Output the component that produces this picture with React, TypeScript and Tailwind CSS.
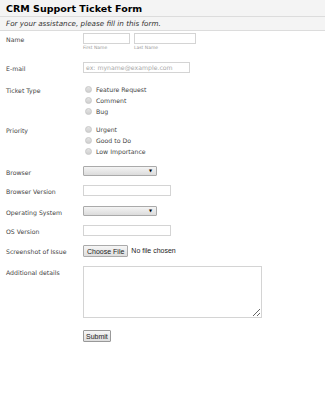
import React from "react"

const font = { fontFamily: '"DejaVu Sans", Verdana, sans-serif' }

function Label({ children }: { children: React.ReactNode }) {
  return <div className="w-[77px] shrink-0 pt-[2px] text-[6.2px] text-[#444]">{children}</div>
}

function Row({ children, className = "" }: { children: React.ReactNode; className?: string }) {
  return <div className={`flex items-start px-[6px] ${className}`}>{children}</div>
}

function TextBox({ w, placeholder }: { w: string; placeholder?: string }) {
  return (
    <div className={`${w} h-[11px] border border-[#d4d4d4] bg-white flex items-center px-[2px] text-[6.2px] text-[#aaa]`}>
      {placeholder}
    </div>
  )
}

function Select() {
  return (
    <div className="w-[74px] h-[10px] border border-[#aaa] rounded-[1px] bg-gradient-to-b from-[#f4f4f4] to-[#dcdcdc] flex items-center justify-end pr-[4px]">
      <span className="text-[4px] text-black leading-none">▼</span>
    </div>
  )
}

function Radios({ items }: { items: string[] }) {
  return (
    <div className="flex flex-col pl-[2px]">
      {items.map((t) => (
        <div key={t} className="flex items-center h-[11px] gap-[4px]">
          <span className="w-[7px] h-[7px] rounded-full border border-[#c8c8c8] bg-gradient-to-b from-[#e4e4e4] to-[#d0d0d0]" />
          <span className="text-[6.2px] text-[#444]">{t}</span>
        </div>
      ))}
    </div>
  )
}

export default function App() {
  return (
    <div className="w-[325px] h-[400px] bg-white" style={font}>
      {/* Header */}
      <div className="bg-[#f4f4f4] border-b border-[#dcdcdc]">
        <div className="px-[6px] pt-[3px] pb-[1px] border-b border-[#dcdcdc] text-[9.5px] font-bold text-black leading-[12px]">
          CRM Support Ticket Form
        </div>
        <div className="px-[6px] py-[2px] text-[7.2px] italic text-[#333] leading-[9px]">
          For your assistance, please fill in this form.
        </div>
      </div>

      <div className="pt-[2px]">
        <Row className="h-[29px]">
          <Label>Name</Label>
          <div className="flex gap-[4px]">
            <div className="flex flex-col">
              <TextBox w="w-[47px]" />
              <span className="text-[4.5px] text-[#999] mt-[1px]">First Name</span>
            </div>
            <div className="flex flex-col">
              <TextBox w="w-[62px]" />
              <span className="text-[4.5px] text-[#999] mt-[1px]">Last Name</span>
            </div>
          </div>
        </Row>

        <Row className="h-[22px]">
          <Label>E-mail</Label>
          <TextBox w="w-[107px]" placeholder="ex: myname@example.com" />
        </Row>

        <Row className="h-[40px]">
          <Label>Ticket Type</Label>
          <Radios items={["Feature Request", "Comment", "Bug"]} />
        </Row>

        <Row className="h-[42px]">
          <Label>Priority</Label>
          <Radios items={["Urgent", "Good to Do", "Low Importance"]} />
        </Row>

        <Row className="h-[19px]">
          <Label>Browser</Label>
          <Select />
        </Row>

        <Row className="h-[21px]">
          <Label>Browser Version</Label>
          <TextBox w="w-[88px]" />
        </Row>

        <Row className="h-[19px]">
          <Label>Operating System</Label>
          <Select />
        </Row>

        <Row className="h-[20px]">
          <Label>OS Version</Label>
          <TextBox w="w-[88px]" />
        </Row>

        <Row className="h-[21px]">
          <Label>Screenshot of Issue</Label>
          <div className="flex items-center gap-[3px]" style={{ fontFamily: '"Liberation Sans", Arial, sans-serif' }}>
            <button className="h-[12px] px-[3px] border border-[#aaa] rounded-[1px] bg-gradient-to-b from-[#f6f6f6] to-[#dedede] text-[7px] text-[#222] leading-none">
              Choose File
            </button>
            <span className="text-[7px] text-[#222]">No file chosen</span>
          </div>
        </Row>

        <Row className="h-[64px]">
          <Label>Additional details</Label>
          <textarea className="w-[179px] h-[52px] border border-[#d4d4d4] bg-white" />
        </Row>

        <Row>
          <div className="w-[77px]" />
          <button
            className="h-[12px] px-[2px] border border-[#999] rounded-[1px] bg-gradient-to-b from-[#f6f6f6] to-[#dedede] text-[7px] text-[#222] leading-none"
            style={{ fontFamily: '"Liberation Sans", Arial, sans-serif' }}
          >
            Submit
          </button>
        </Row>
      </div>
    </div>
  )
}
